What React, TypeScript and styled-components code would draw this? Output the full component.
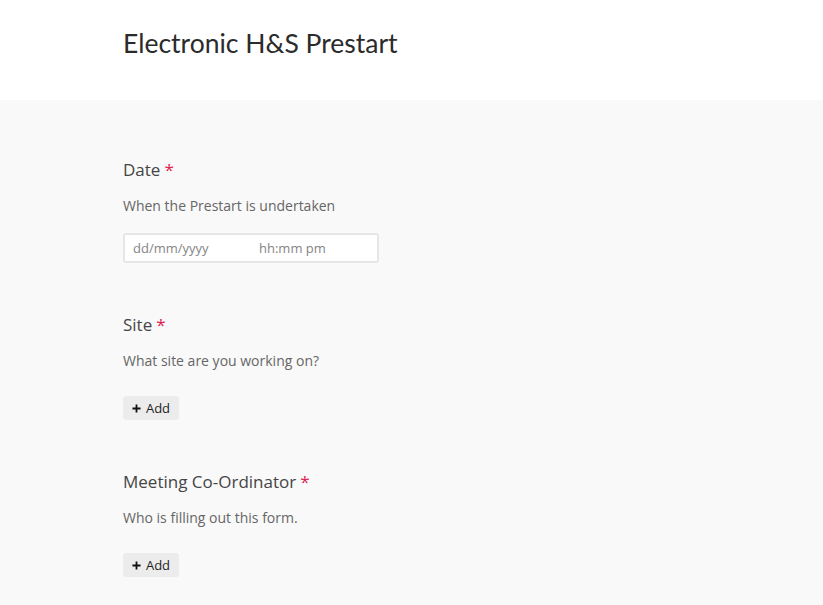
import React from "react";
import styled, { createGlobalStyle } from "styled-components";

const Global = createGlobalStyle`
  html, body { margin: 0; padding: 0; background: #f9f9f9; }
  body { font-family: "Open Sans", "Noto Sans", sans-serif; }
  * { box-sizing: border-box; }
`;

const Header = styled.header`
  background: #ffffff;
  height: 100px;
  padding: 0 0 0 123px;
  display: flex;
  align-items: center;
`;

const Title = styled.h1`
  margin: 0;
  margin-top: -15px;
  font-family: "Lato", "Noto Sans", sans-serif;
  font-weight: 400;
  font-size: 26.5px;
  letter-spacing: 0;
  color: #2b2b2b;
`;

const Main = styled.main`
  background: #f9f9f9;
  padding: 56px 0 40px 123px;
  display: flex;
  flex-direction: column;
  gap: 48px;
`;

const Field = styled.section`
  display: flex;
  flex-direction: column;
  align-items: flex-start;
`;

const Label = styled.div`
  font-size: 17px;
  line-height: 28px;
  color: #454545;
`;

const Star = styled.span`
  color: #e0204f;
  margin-left: 4px;
`;

const Desc = styled.div`
  margin-top: 12px;
  font-size: 14px;
  line-height: 20px;
  color: #666;
`;

const Input = styled.div`
  margin-top: 17px;
  width: 256px;
  height: 30px;
  background: #fff;
  border: 2px solid #e6e6e6;
  border-radius: 3px;
  display: flex;
  align-items: center;
  padding-left: 8px;
  font-size: 13px;
  color: #858585;
`;

const Part = styled.span<{ $w?: number }>`
  width: ${(p) => (p.$w ? `${p.$w}px` : "auto")};
`;

const AddButton = styled.button`
  margin-top: 25px;
  height: 24px;
  width: 56px;
  border: none;
  border-radius: 3px;
  background: #ececec;
  color: #1e1e1e;
  font-family: "Open Sans", "Noto Sans", sans-serif;
  font-size: 13px;
  display: flex;
  align-items: center;
  justify-content: center;
  gap: 5px;
  padding: 0;
  cursor: pointer;
`;

const Plus = styled.svg`
  width: 9px;
  height: 9px;
`;

const Add = () => (
  <AddButton>
    <Plus viewBox="0 0 10 10">
      <path d="M5 0.5v9M0.5 5h9" stroke="#111" strokeWidth="2" />
    </Plus>
    Add
  </AddButton>
);

export default function App() {
  return (
    <>
      <Global />
      <Header>
        <Title>Electronic H&amp;S Prestart</Title>
      </Header>
      <Main>
        <Field>
          <Label>
            Date<Star>*</Star>
          </Label>
          <Desc>When the Prestart is undertaken</Desc>
          <Input>
            <Part $w={126}>dd/mm/yyyy</Part>
            <Part>hh:mm pm</Part>
          </Input>
        </Field>
        <Field>
          <Label>
            Site<Star>*</Star>
          </Label>
          <Desc>What site are you working on?</Desc>
          <Add />
        </Field>
        <Field>
          <Label>
            Meeting Co-Ordinator<Star>*</Star>
          </Label>
          <Desc>Who is filling out this form.</Desc>
          <Add />
        </Field>
      </Main>
    </>
  );
}
